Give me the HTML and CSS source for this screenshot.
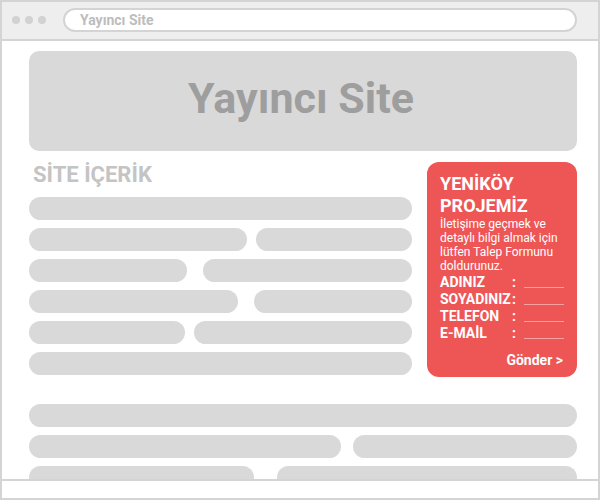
FILE: index.html
```html
<!DOCTYPE html>
<html lang="tr">
<head>
  <meta charset="UTF-8" />
  <meta name="viewport" content="width=device-width, initial-scale=1.0" />
  <title>Yayıncı Site</title>
  <link rel="stylesheet" href="styles.css">
</head>
<body>
  <div class="window">
    <div class="topbar">
      <div class="dots"><span></span><span></span><span></span></div>
      <div class="url">Yayıncı Site</div>
    </div>

    <div class="page">
      <div class="hero">Yayıncı Site</div>

      <div class="main">
        <div class="content">
          <h2>SİTE İÇERİK</h2>
          <div class="row"><div class="bar" style="width: 100%"></div></div>
          <div class="row"><div class="bar" style="width: 218px"></div><div class="bar" style="width: 156px"></div></div>
          <div class="row"><div class="bar" style="width: 158px"></div><div class="bar" style="width: 209px"></div></div>
          <div class="row"><div class="bar" style="width: 209px"></div><div class="bar" style="width: 158px"></div></div>
          <div class="row"><div class="bar" style="width: 156px"></div><div class="bar" style="width: 218px"></div></div>
          <div class="row"><div class="bar" style="width: 100%"></div></div>
        </div>

        <div class="card">
          <h3>YENİKÖY<br>PROJEMİZ</h3>
          <p>İletişime geçmek ve detaylı bilgi almak için lütfen Talep Formunu doldurunuz.</p>
          <form class="form">
            <label><span>ADINIZ</span>:<i></i></label>
            <label><span>SOYADINIZ</span>:<i></i></label>
            <label><span>TELEFON</span>:<i></i></label>
            <label><span>E-MAİL</span>:<i></i></label>
          </form>
          <div class="send">Gönder &gt;</div>
        </div>
      </div>

      <div class="more">
        <div class="row"><div class="bar" style="width: 100%"></div></div>
        <div class="row"><div class="bar" style="width: 312px"></div><div class="bar" style="width: 224px"></div></div>
        <div class="row"><div class="bar" style="width: 225px"></div><div class="bar" style="width: 300px"></div></div>
      </div>
    </div>

    <div class="footer"></div>
  </div>
</body>
</html>
```

FILE: styles.css
```css
* {
  box-sizing: border-box;
}

body {
  margin: 0;
  background: white;
  font-family: Roboto, 'Liberation Sans', Arial, sans-serif;
}

.window {
  width: 600px;
  height: 500px;
  border: 2px solid #d4d4d4;
  display: flex;
  flex-direction: column;
  overflow: hidden;
}

.topbar {
  height: 39px;
  flex-shrink: 0;
  background: #eeeeee;
  border-bottom: 2px solid #d4d4d4;
  display: flex;
  align-items: center;
  padding: 0 21px 2px 10px;
}

.dots {
  display: flex;
  gap: 5px;
  width: 51px;
}

.dots span {
  width: 8px;
  height: 8px;
  border-radius: 50%;
  background: #d2d2d2;
}

.url {
  flex: 1;
  height: 24px;
  border: 2px solid #d4d4d4;
  border-radius: 12px;
  background: white;
  color: #bdbdbd;
  font-weight: bold;
  font-size: 14px;
  line-height: 20px;
  padding-left: 15px;
}

.page {
  flex: 1;
  overflow: hidden;
  padding: 10px 21px 0 27px;
}

.hero {
  height: 100px;
  background: #d9d9d9;
  border-radius: 10px;
  color: #9e9e9e;
  font-size: 43px;
  font-weight: bold;
  display: flex;
  align-items: center;
  justify-content: center;
  padding: 0 4px 7px 0;
}

.main {
  display: flex;
  gap: 15px;
  margin-top: 11px;
}

.content {
  flex: 1;
}

.content h2 {
  margin: 0 0 9px 4px;
  font-size: 22px;
  line-height: 26px;
  color: #c4c4c4;
}

.row {
  display: flex;
  justify-content: space-between;
  margin-bottom: 8px;
}

.bar {
  height: 23px;
  border-radius: 12px;
  background: #d9d9d9;
}

.card {
  width: 150px;
  height: 215px;
  background: #ee5656;
  border-radius: 12px;
  color: white;
  padding: 11px 12px 0 13px;
}

.card h3 {
  margin: 0;
  font-size: 18px;
  line-height: 22px;
}

.card p {
  margin: 0 0 1px;
  font-size: 12px;
  line-height: 14px;
}

.form label {
  display: flex;
  align-items: center;
  font-size: 14px;
  font-weight: bold;
  line-height: 17px;
}

.form label span {
  width: 72px;
}

.form label i {
  width: 40px;
  height: 1px;
  margin: 10px 0 0 8px;
  background: rgba(255, 255, 255, 0.45);
}

.send {
  margin-top: 10px;
  text-align: right;
  font-size: 14px;
  font-weight: bold;
  padding-right: 2px;
}

.more {
  margin-top: 21px;
}

.footer {
  height: 19px;
  flex-shrink: 0;
  border-top: 2px solid #d4d4d4;
}
```
